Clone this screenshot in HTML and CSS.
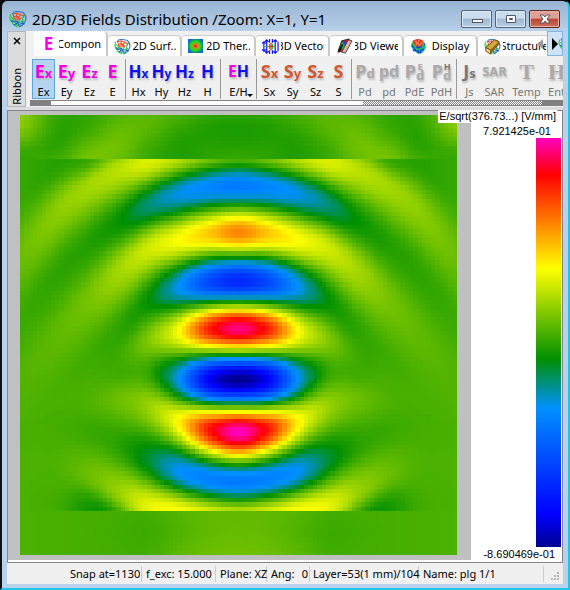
FILE: index.html
```html
<!DOCTYPE html>
<html lang="en">
  <head>
    <meta charset="utf-8">
    <title>2D/3D Fields Distribution</title>
    <link rel="stylesheet" href="styles.css">
  </head>
  <body>
    <svg width="0" height="0" class="defs" aria-hidden="true">
      <symbol id="globe" viewBox="0 0 18 18">
        <g fill="none" stroke-width="1.1">
          <path d="M3 4Q5 1 9 1.5L14 2.5Q17 5 17 9L15 14L10 17" stroke="#2b6fd0" />
          <path d="M2 4Q0 8 2 11L5 15L9 17M2 7L6 10L8 16M5 9L3 13" stroke="#22c934" />
          <path d="M11 9L9 13L12 17M14 7L13 12L15 14M9 13L15 11M16 5L13 8" stroke="#22b855" />
          <path d="M2 10L5 12L8 11L10 16M5 15L8 13M11 14L15 13" stroke="#1b55dd" />
          <path d="M4 4L8 3L12 5L15 6M4 7L8 6L12 9M4 4L5 8L8 10M8 3L7 7L11 10M12 4L9 8" stroke="#f04a22" />
        </g>
      </symbol>
    </svg>

    <div class="window">
      <header class="titlebar">
        <svg class="app-icon"><use href="#globe" /></svg>
        <h1>2D/3D Fields Distribution /Zoom: X=1, Y=1</h1>
        <div class="window-buttons">
          <button aria-label="Minimize"><svg viewBox="0 0 12 12"><rect x="1.5" y="6.5" width="10" height="3" fill="#fff" stroke="#535666" /></svg></button>
          <button aria-label="Maximize"><svg viewBox="0 0 12 12"><path d="M1.5 2.5h9v7h-9zM4.5 5.5h3v1h-3z" fill="#fff" fill-rule="evenodd" stroke="#535666" /></svg></button>
          <button class="close" aria-label="Close"><svg viewBox="0 0 12 12"><path d="M1 2h3.500L6 4l1.500-2H11L8 6l3 4H7.500L6 8l-1.500 2H1l3-4z" fill="#fff" stroke="#535666" /></svg></button>
        </div>
      </header>

      <main class="client">
        <div class="ribbon">
          <div class="ribbon-handle">
            <button aria-label="Close ribbon"><svg viewBox="0 0 8 8"><path d="M1 1L7 7M7 1L1 7" stroke="#000" stroke-width="1.500" /></svg></button>
            <span>Ribbon</span>
          </div>
          <div class="ribbon-body">
            <nav class="tabs">
              <button class="tab active"><b class="tab-letter">E</b><span>Compon.</span></button>
              <button class="tab"><svg><use href="#globe" /></svg><span>2D Surf..</span></button>
              <button class="tab"><i class="thermal"></i><span>2D Ther..</span></button>
              <button class="tab">
                <svg viewBox="0 0 18 18"><g fill="none" stroke="#1418f0" stroke-width="1.300"><path d="M2 4v10M5 2v14M8 1v4M8 13v4M11 1v4M11 13v4M14 2v14M17 4v10M0 6l2-2 2 2M0 12l2 2 2-2M3 4l2-2 2 2M3 14l2 2 2-2M12 4l2-2 2 2M12 14l2 2 2-2" /><path d="M8 6v6M11 6v6M3 9h12" stroke="#18c23c" /><path d="M9.500 5v8M7 9h5" stroke="#f02020" /></g></svg>
                <span>3D Vector</span>
              </button>
              <button class="tab">
                <svg viewBox="0 0 18 18"><path d="M6 3L14 1L11 13L2 15z" fill="#c42222" stroke="#222" /><path d="M7 4L11 8L8 13L4 9z" fill="#1bbd4c" /><path d="M9 3L12 6L10 9L7 5z" fill="#2a40dd" /><path d="M13 2L17 3L10 16L6 15z" fill="#e9b0a0" stroke="#444" /><path d="M3 14l4-7" stroke="#111" stroke-width="2" /></svg>
                <span>3D Viewe</span>
              </button>
              <button class="tab">
                <svg viewBox="0 0 18 18"><path d="M3 3Q9-1 15 4L17 10Q14 17 9 17Q2 13 1 8z" fill="#28b9aa" /><path d="M3 3Q9-1 14 3L13 9L7 10L3 7z" fill="#f03a20" /><path d="M2 8L6 11L9 16M5 10L12 10L16 6M12 10L11 16M3 13L9 13L15 12" fill="none" stroke="#1646de" stroke-width="2" /><path d="M2 5L5 9L8 13M15 5L13 10L9 13" fill="none" stroke="#23d33b" stroke-width="1.500" /><path d="M5 3L11 8M10 2L6 8M14 4L9 8" stroke="#ff9c70" /></svg>
                <span>Display</span>
              </button>
              <button class="tab structure">
                <svg viewBox="0 0 18 18"><use href="#globe" /><path d="M2 10L11 2L16 4L7 13z" fill="#d5a83c" stroke="#6b4c12" /><path d="M2 10L7 13V17L2 14z" fill="#f5d77d" stroke="#6b4c12" /><path d="M7 13L16 4V7L7 17z" fill="#8d6519" /></svg>
                <span>Structure</span>
              </button>
              <div class="tab-scroll">
                <button class="left" aria-label="Scroll tabs left"></button>
                <button class="right" aria-label="Scroll tabs right"><svg viewBox="0 0 18 18"><use href="#globe" /></svg></button>
              </div>
            </nav>

            <div class="tools">
              <div class="group electric">
                <button class="tool selected"><b>E<small>x</small></b>Ex</button>
                <button class="tool"><b>E<small>y</small></b>Ey</button>
                <button class="tool"><b>E<small>z</small></b>Ez</button>
                <button class="tool"><b>E</b>E</button>
              </div>
              <div class="group magnetic">
                <button class="tool"><b>H<small>x</small></b>Hx</button>
                <button class="tool"><b>H<small>y</small></b>Hy</button>
                <button class="tool"><b>H<small>z</small></b>Hz</button>
                <button class="tool"><b>H</b>H</button>
              </div>
              <div class="group">
                <button class="tool menu"><b class="pair"><span class="pink">E</span><span class="blue">H</span></b>E/H</button>
              </div>
              <div class="group poynting">
                <button class="tool"><b>S<small>x</small></b>Sx</button>
                <button class="tool"><b>S<small>y</small></b>Sy</button>
                <button class="tool"><b>S<small>z</small></b>Sz</button>
                <button class="tool"><b>S</b>S</button>
              </div>
              <div class="group power">
                <button class="tool" disabled><b>P<small>d</small></b>Pd</button>
                <button class="tool" disabled><b class="low">pd</b>pd</button>
                <button class="tool wide" disabled><b>P<small class="stack"><sup>E</sup>d</small></b>PdE</button>
                <button class="tool wide" disabled><b>P<small class="stack"><sup class="dark">H</sup>d</small></b>PdH</button>
              </div>
              <div class="group thermal-tools">
                <button class="tool dark" disabled><b>J<small>s</small></b>Js</button>
                <button class="tool wide" disabled><b class="sar">SAR</b>SAR</button>
                <button class="tool wider" disabled><b class="serif">T</b>Temp</button>
                <button class="tool" disabled><b class="serif">H</b>Ent</button>
              </div>
            </div>
            <div class="scrollbar"><i class="end"></i><i class="thumb"></i><i class="track"></i><i class="end"></i></div>
          </div>
        </div>

        <section class="view">
          <div class="plot"><canvas id="field" width="100" height="100"></canvas></div>
          <aside class="legend">
            <span class="unit">E/sqrt(376.73...) [V/mm]</span>
            <span class="max">7.921425e-01</span>
            <div class="scale"></div>
            <span class="min">-8.690469e-01</span>
          </aside>
        </section>

        <footer class="statusbar">
          <span class="snap">Snap at=1130</span>
          <span class="freq">f_exc: 15.000</span>
          <span class="plane">Plane: XZ</span>
          <span class="angle"><span>Ang:</span><span>0</span></span>
          <span class="layer">Layer=53(1 mm)/104</span>
          <span class="name">Name: plg 1/1</span>
          <svg class="grip" viewBox="0 0 9 9"><path d="M6 0h2v2h-2zM3 3h2v2h-2zM6 3h2v2h-2zM0 6h2v2h-2zM3 6h2v2h-2zM6 6h2v2h-2z" fill="#b8b8b8" /></svg>
        </footer>
      </main>
    </div>
    <script src="field.js"></script>
  </body>
</html>
```
FILE: styles.css
```css
* {
  box-sizing: border-box;
}
body {
  margin: 0;
  background: #000;
  font: 11px/16px "Noto Sans", "Open Sans", sans-serif;
  color: #000;
}
.defs {
  position: absolute;
}
button {
  margin: 0;
  padding: 0;
  border: 0;
  background: none;
  font: inherit;
  color: inherit;
}
.window {
  display: flex;
  flex-direction: column;
  min-height: 100vh;
  padding: 0 5px 4px 5px;
  border: 2px solid #111;
  border-top-width: 1px;
  border-right-color: #22c5e5;
  border-bottom-color: #22c5e5;
  border-radius: 7px 7px 0 0;
  background: linear-gradient(#98b4d2, #b9d1ea 31px);
}

/* title bar */
.titlebar {
  display: flex;
  align-items: center;
  height: 30px;
  padding: 6px 3px 0 2px;
}
.app-icon {
  width: 18px;
  height: 18px;
}
h1 {
  flex: 1;
  margin: 0 0 0 5px;
  font-size: 15px;
  font-weight: normal;
  line-height: 22px;
  white-space: nowrap;
}
.window-buttons {
  display: flex;
  gap: 3px;
}
.window-buttons button {
  width: 31px;
  height: 18px;
  border: 1px solid #53657c;
  border-radius: 2px;
  background: linear-gradient(#cbdcee 45%, #9fb7d1 50%, #b9cfe6);
  box-shadow: inset 0 0 0 1px #dbe8f5;
}
.window-buttons .close {
  border-color: #5c2a25;
  background: linear-gradient(#e0a195 45%, #bd4530 50%, #cd705a);
  box-shadow: inset 0 0 0 1px #e6b4aa;
}
.window-buttons svg {
  display: block;
  width: 12px;
  height: 12px;
  margin: 0 auto;
}
.client {
  flex: 1;
  display: flex;
  flex-direction: column;
  background: #f0f0f0;
}

/* ribbon */
.ribbon {
  display: flex;
  height: 79px;
  border-bottom: 3px solid #dcdcdc;
}
.ribbon-handle {
  display: flex;
  flex-direction: column;
  justify-content: space-between;
  align-items: center;
  width: 19px;
  padding: 5px 0 1px;
  border: 1px solid #b5b5b5;
  background: #dcdcdc;
}
.ribbon-handle svg {
  display: block;
  width: 8px;
  height: 8px;
}
.ribbon-handle span {
  writing-mode: vertical-rl;
  transform: rotate(180deg);
}
.ribbon-body {
  flex: 1;
  min-width: 0;
  padding-left: 4px;
}
.tabs {
  position: relative;
  display: flex;
  align-items: flex-end;
  height: 26px;
  padding-left: 4px;
  border-bottom: 1px solid #f0f0f0;
  overflow: hidden;
}
.tab {
  display: flex;
  flex: 0 0 74px;
  align-items: center;
  gap: 2px;
  height: 21px;
  padding-left: 6px;
  border-right: 2px solid #c8c8c8;
  border-top: 1px solid #ccc;
  border-radius: 4px 5px 0 0;
  background: #fff;
}
.tab.active {
  height: 25px;
  border-top: 0;
}
.tab svg,
.thermal {
  flex: 0 0 17px;
  height: 17px;
}
.thermal {
  flex-basis: 15px;
  height: 14px;
  margin-right: 2px;
  background: radial-gradient(#f03010 10%, #e08020 20%, #20e020 45%, #10b040 60%, #1060f0 80%);
}
.tab-letter {
  flex: 0 0 17px;
  font-size: 17px;
  color: #f0e;
}
.tab span {
  display: flex;
  flex: 0 0 43px;
  justify-content: center;
  overflow: hidden;
  white-space: nowrap;
}
.tab.structure {
  flex-basis: 72px;
}
.tab-scroll {
  position: absolute;
  top: 0;
  right: 0;
  display: flex;
  align-items: center;
  gap: 4px;
}
.tab-scroll .left {
  border: solid transparent;
  border-width: 5px 6px 5px 0;
  border-right-color: #999;
}
.tab-scroll .right {
  display: flex;
  align-items: center;
  width: 16px;
  height: 25px;
  border: 1px solid #82b4e5;
  background: #cfe3f7;
  overflow: hidden;
}
.tab-scroll .right::before {
  content: "";
  margin-left: 4px;
  border: solid transparent;
  border-width: 6px 0 6px 6px;
  border-left-color: #000;
}
.tab-scroll svg {
  flex: 0 0 16px;
  height: 16px;
}

.tools {
  display: flex;
  height: 43px;
  padding: 2px 0 1px 2px;
  overflow: hidden;
}
.group {
  display: flex;
  flex-shrink: 0;
  padding-right: 1px;
  border-right: 1px solid #999;
  margin-right: 1px;
}
.group:last-child {
  border: 0;
}
.tool {
  display: flex;
  flex-direction: column;
  align-items: center;
  width: 23px;
  height: 40px;
  white-space: nowrap;
}
.tool b {
  display: flex;
  align-items: baseline;
  height: 25px;
  font-size: 18px;
  line-height: 25px;
  text-shadow: 1px 2px 2px #bbb;
}
.tool small {
  font-size: 13px;
}
.tool.selected {
  border: 1px solid #5fa5dd;
  background: #b4d5f2;
}
.tool.selected b {
  height: 24px;
  line-height: 23px;
}
.electric b,
.pink {
  color: #f000e8;
}
.magnetic b,
.blue {
  color: #1010e8;
}
.poynting b {
  color: #d2572f;
}
.magnetic b {
  font-size: 17px;
}
.magnetic small {
  font-size: 12px;
}
.tool.menu {
  position: relative;
  width: 33px;
}
.tool.menu::after {
  content: "";
  position: absolute;
  right: 2px;
  bottom: 2px;
  border: solid transparent;
  border-width: 3px 3px 0;
  border-top-color: #000;
}
.tool .pair,
.tool .low {
  font-size: 16px;
}
.tool:disabled {
  color: #777;
}
.tool:disabled b {
  color: #aaa;
}
.power .tool {
  width: 24px;
}
.power .wide,
.thermal-tools .wide {
  width: 27px;
}
.tool.wider {
  width: 37px;
}
.tool:disabled.dark b,
.tool .dark {
  color: #777;
}
.tool .stack {
  display: flex;
  flex-direction: column;
  align-self: center;
  line-height: 9px;
}
.stack sup {
  font-size: 9px;
  line-height: 8px;
}
.tool .sar {
  font-size: 13px;
}
.tool .serif {
  font-family: "Liberation Serif", serif;
  font-size: 22px;
}
.scrollbar {
  display: flex;
  height: 6px;
  border: solid #808080;
  border-width: 1px 0;
}
.scrollbar .end {
  flex: 0 0 21px;
  background: #808080;
}
.scrollbar .thumb {
  flex: 312;
  background: #fff;
}
.scrollbar .track {
  flex: 179;
  background: repeating-conic-gradient(#808080 0 25%, #fff 0 50%) 0 0 / 2px 2px;
}

/* field view */
.view {
  flex: 1;
  display: flex;
  border: 1px solid #858590;
  background: #fff;
}
.plot {
  flex: 1;
  display: flex;
  margin-bottom: 2px;
  padding: 4px 14px 5px 12px;
  background: #c0c0c0;
}
#field {
  width: 100%;
  height: 440px;
  image-rendering: pixelated;
}
.legend {
  position: relative;
  display: flex;
  flex-direction: column;
  align-items: flex-end;
  width: 91px;
  padding: 14px 1px 0 0;
  font: 11px/13px "Liberation Sans", Arial, sans-serif;
}
.unit {
  position: absolute;
  top: -1px;
  right: 5px;
  padding: 0 1px;
  background: #fff;
  white-space: nowrap;
}
.legend .max {
  margin-right: 10px;
}
.legend .min {
  margin-right: 6px;
  line-height: 15px;
}
.scale {
  flex: 1;
  width: 25px;
  background: linear-gradient(#ff00c0, #f00 9%, #ff0 32%, #009000 54%, #0090ff 66%, #00f 92%, #000090);
}

/* status bar */
.statusbar {
  display: flex;
  align-items: center;
  height: 21px;
  padding-left: 60px;
  white-space: nowrap;
}
.statusbar > span {
  padding-left: 4px;
  border-right: 1px solid #ccc;
}
.statusbar .snap {
  width: 75px;
  padding-left: 3px;
}
.statusbar .freq {
  width: 74px;
}
.statusbar .plane {
  width: 51px;
}
.statusbar .angle {
  display: flex;
  justify-content: space-between;
  width: 43px;
  padding-right: 1px;
}
.statusbar .layer {
  width: 109px;
  padding-left: 3px;
}
.statusbar .name {
  flex: 1;
}
.grip {
  width: 9px;
  height: 9px;
  margin: 6px 3px 0 7px;
}
```
FILE: field.js
```javascript
// colour map, lowest field value first
const stops = [
  [-52, 0, 0, 144],
  [-44, 0, 0, 255],
  [-18, 0, 144, 255],
  [-6.4, 0, 144, 0],
  [16, 255, 255, 0],
  [39, 255, 0, 0],
  [48, 255, 0, 192],
];

// Crests and troughs of the wave, one list per ridge.
// Each pair is [height, value] at steps of 30 away from the axis.
const ridges = [
  [[60, 0], [60, 0], [60, 0], [60, 0], [90, 0], [135, -2], [155, -3], [220, -2]],
  [[120, 4], [125, 6], [135, 10], [148, 13], [175, 10], [220, 8], [290, 6], [400, 3.5]],
  [[222, -22], [227, -20], [245, -17], [278, -12], [328, -6], [395, -3.5], [480, -2.5], [590, -1.5]],
  [[362, 27], [366, 21], [384, 16], [410, 12], [475, 8], [560, 4], [660, 2], [770, 1]],
  [[508, -37], [512, -31], [526, -18], [565, -6.5], [655, -2.5], [745, -1], [830, 0], [900, 0.3]],
  [[650, 45], [652, 36], [660, 16], [685, 5], [740, -1], [790, -0.5], [860, 0], [920, 0]],
  [[803, -52], [803, -44], [800, -18], [780, -2], [780, -1], [810, 0], [885, 0], [930, 0]],
  [[960, 48], [952, 37], [930, 17], [885, 7], [860, 3], [870, 0.5], [900, -0.5], [940, 0]],
  [[1108, -22], [1100, -21], [1078, -18], [1045, -9], [1000, -3], [955, -1.5], [940, -0.5], [980, 0]],
  [[1225, 16], [1217, 16], [1205, 17], [1185, 14], [1140, 7], [1090, 3], [1060, 0.5], [1040, 0.3]],
  [[1340, 0], [1340, 0], [1330, 0], [1300, 0], [1240, -6], [1192, -5], [1190, -1], [1190, 0]],
];

// weak field above and below the sampled box
const above = [
  [-2.5, -2, 0, 1.5, 0.5, -2, -2, 4.5],
  [-4, -3.5, -1.5, 1.5, 2, -1.5, -2.5, 4],
  [-4, -3.5, -3, 0.5, 3, 0, -3, 2],
  [-3, -3, -3.5, -1, 3.5, 2.5, -2.5, -1],
  [-1.5, -2.5, -3.5, -1.5, 2.5, 4, -0.5, -2],
];
const below = [
  [2, 2, 1, -0.5, -0.5, -0.3, 0, 0.2],
  [2.5, 2, 0.5, -1.2, -0.7, -0.3, 0, 0.2],
  [3.5, 3, 1.5, -0.5, -0.5, -0.3, 0, 0.2],
];

function along(list, p) {
  const i = Math.floor(p);
  const f = p - i;
  const end = list.length - 1;
  const at = (k) =>
    k > end ? list[end] + (k - end) * (list[end] - list[end - 1]) : list[Math.abs(k)];
  const [a, b, c, d] = [at(i - 1), at(i), at(i + 1), at(i + 2)];
  return b + (f * (c - a + f * (2 * a - 5 * b + 4 * c - d + f * (3 * (b - c) + d - a)))) / 2;
}

function ease(a, b, f) {
  return a + ((b - a) * (1 - Math.cos(Math.PI * f))) / 2;
}

function sheet(rows, p, f) {
  const k = Math.min(Math.floor(f * (rows.length - 1)), rows.length - 2);
  const t = f * (rows.length - 1) - k;
  return along(rows[k], p) * (1 - t) + along(rows[k + 1], p) * t;
}

function fieldAt(p, y) {
  if (y < 141) return sheet(above, p, (y - 9) / 132);
  if (y > 1197) return sheet(below, p, (y - 1197) / 132);
  const heights = ridges.map((r) => along(r.map((k) => k[0]), p));
  const values = ridges.map((r) => along(r.map((k) => k[1]), p));
  let i = 0;
  while (i < heights.length - 2 && heights[i + 1] < y) i++;
  const f = (y - heights[i]) / (heights[i + 1] - heights[i]);
  return ease(values[i], values[i + 1], Math.max(0, Math.min(1, f)));
}

function colour(v) {
  v = Math.max(-52, Math.min(48, v));
  let i = 0;
  while (i < stops.length - 2 && stops[i + 1][0] < v) i++;
  const f = (v - stops[i][0]) / (stops[i + 1][0] - stops[i][0]);
  return [1, 2, 3].map((c) => stops[i][c] + (stops[i + 1][c] - stops[i][c]) * f);
}

const ctx = document.getElementById('field').getContext('2d');
const image = ctx.createImageData(100, 100);
for (let row = 0; row < 100; row++) {
  for (let col = 0; col < 100; col++) {
    const p = (Math.abs(col + 0.5 - 50) * 4.37) / 30;
    const rgb = colour(fieldAt(p, 9 + (row + 0.5) * 13.2));
    image.data.set([...rgb, 255], (row * 100 + col) * 4);
  }
}
ctx.putImageData(image, 0, 0);
```
